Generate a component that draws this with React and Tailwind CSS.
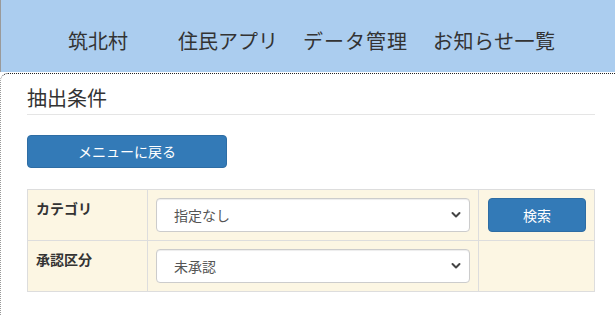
const font = { fontFamily: '"Noto Sans CJK JP", "Noto Sans", sans-serif' }

const navItems = [
  { label: '住民アプリ', cls: 'ml-[50px]' },
  { label: 'データ管理', cls: 'ml-[25px] tracking-[1px]' },
  { label: 'お知らせ一覧', cls: 'ml-[25px] tracking-[0.5px]' },
]

function Chevron() {
  return (
    <svg width="10" height="7" viewBox="0 0 10 7" className="pointer-events-none absolute right-[8px] top-1/2 -translate-y-1/2">
      <path d="M1.5 1.5 L5 5 L8.5 1.5" fill="none" stroke="#444" strokeWidth="2" strokeLinecap="round" strokeLinejoin="round" />
    </svg>
  )
}

function Select({ value }) {
  return (
    <div className="relative h-[34px] w-full rounded-[4px] border border-[#ccc] bg-white shadow-[inset_0_1px_1px_rgba(0,0,0,0.075)]">
      <div className="flex h-full items-center pl-[17px] text-[14px] text-[#555]">{value}</div>
      <Chevron />
    </div>
  )
}

export default function App() {
  return (
    <div className="min-h-[315px] w-[615px] overflow-hidden bg-white text-[#333]" style={font}>
      {/* Header */}
      <header className="flex h-[72px] items-center border-l border-[#9a9a9a] bg-[#abcdef] pt-[9px] text-[20px] text-[#333]">
        <span className="ml-[67px]">筑北村</span>
        {navItems.map((item) => (
          <span key={item.label} className={item.cls}>{item.label}</span>
        ))}
      </header>

      {/* Content */}
      <div className="mt-px min-h-[243px] rounded-tl-[8px] border-l border-t border-dotted border-l-[#999] border-t-[#222] pl-[26px] pr-[20px]">
        <h2 className="border-b border-[#e5e5e5] pb-[2px] pt-[10px] text-[20px] font-normal leading-[28px]">抽出条件</h2>

        <button className="mt-[20px] flex h-[33px] w-[200px] items-center justify-center rounded-[4px] border border-[#2e6da4] bg-[#337ab7] text-[14px] text-white">
          メニューに戻る
        </button>

        <table className="mt-[21px] w-[568px] border-collapse bg-[#fcf6e3] text-[14px]">
          <tbody>
            <tr>
              <th className="w-[120px] border border-[#ddd] p-[8px] text-left align-top font-bold leading-[20px]">カテゴリ</th>
              <td className="w-[331px] border border-[#ddd] p-[8px] align-top">
                <Select value="指定なし" />
              </td>
              <td className="border border-[#ddd] py-[8px] pl-[9px] pr-[8px] align-top">
                <button className="flex h-[34px] w-full items-center justify-center rounded-[4px] border border-[#2e6da4] bg-[#337ab7] text-[14px] text-white">
                  検索
                </button>
              </td>
            </tr>
            <tr>
              <th className="border border-[#ddd] p-[8px] text-left align-top font-bold leading-[20px]">承認区分</th>
              <td className="border border-[#ddd] p-[8px] align-top">
                <Select value="未承認" />
              </td>
              <td className="border border-[#ddd] p-[8px]"></td>
            </tr>
          </tbody>
        </table>
      </div>
    </div>
  )
}
